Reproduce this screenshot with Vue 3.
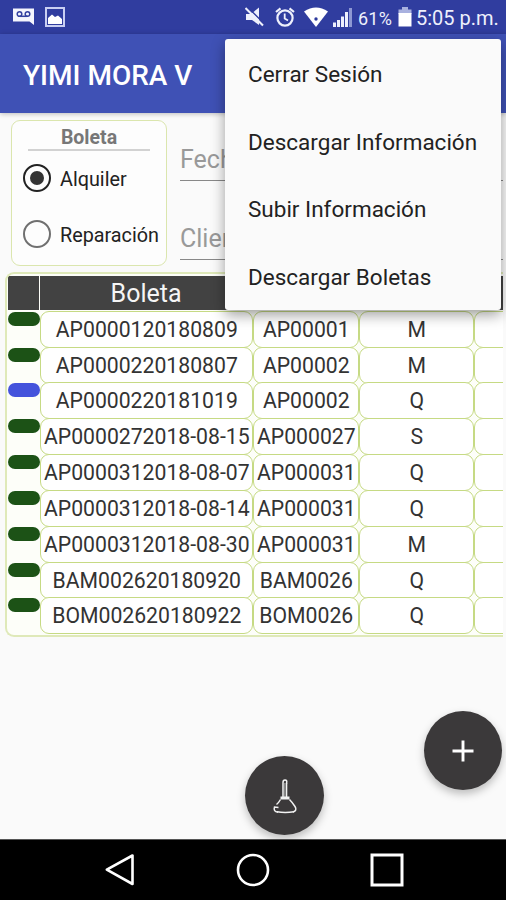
<script setup>
import { ref } from "vue";

const tipo = ref("alquiler"); // tipo de boleta seleccionado
const menuItems = [
    "Cerrar Sesión",
    "Descargar Información",
    "Subir Información",
    "Descargar Boletas",
];
const boletas = [
    { boleta: "AP0000120180809", equipo: "AP00001", modo: "M" },
    { boleta: "AP0000220180807", equipo: "AP00002", modo: "M" },
    { boleta: "AP0000220181019", equipo: "AP00002", modo: "Q", pendiente: true },
    { boleta: "AP0000272018-08-15", equipo: "AP000027", modo: "S" },
    { boleta: "AP0000312018-08-07", equipo: "AP000031", modo: "Q" },
    { boleta: "AP0000312018-08-14", equipo: "AP000031", modo: "Q" },
    { boleta: "AP0000312018-08-30", equipo: "AP000031", modo: "M" },
    { boleta: "BAM002620180920", equipo: "BAM0026", modo: "Q" },
    { boleta: "BOM002620180922", equipo: "BOM0026", modo: "Q" },
];
</script>
<template>
    <div class="screen">
        <!-- barra de estado -->
        <div class="status">
            <svg class="voicemail" width="22" height="18" viewBox="0 0 22 18">
                <path d="M0 0.5H21V17L16.500 13.500H0Z" fill="#f4f5fd" />
                <g fill="none" stroke="#3341a0" stroke-width="1.500">
                    <circle cx="6.500" cy="6" r="2.300" />
                    <circle cx="14.500" cy="6" r="2.300" />
                    <path d="M6.500 8.300H14.500" />
                </g>
            </svg>
            <svg class="picture" width="20" height="20" viewBox="0 0 20 20">
                <rect x="1" y="1" width="18" height="18" fill="none" stroke="#c9cff2" stroke-width="2" />
                <path d="M3 17V11L7 7.500L10 10L13 8.500L17 12V17Z" fill="#fff" />
            </svg>
            <span class="grow"></span>
            <svg class="mute" width="20" height="20" viewBox="0 0 20 20">
                <path d="M1 7H6L14 0.500V18L7 13H1Z" fill="#eef0fc" />
                <path d="M1.500 -1L20 17.500" stroke="#303d9f" stroke-width="1.500" />
                <path d="M0.500 1L18 18.500" stroke="#eef0fc" stroke-width="2" />
            </svg>
            <svg class="alarm" width="20" height="20" viewBox="0 0 20 20">
                <g fill="none" stroke="#eef0fc" stroke-width="2.200">
                    <circle cx="10" cy="11" r="7.600" />
                    <path d="M1 5L5.500 1.300M19 5L14.500 1.300" />
                    <path d="M9.700 6.500V11.500L13 13.500" stroke-width="1.800" />
                </g>
            </svg>
            <svg class="wifi" width="24" height="20" viewBox="0 0 24 20">
                <path d="M0 4.500Q12 -3.500 24 4.500L12 20Z" fill="#fff" />
                <circle cx="12" cy="12" r="1.700" fill="#2d3a9d" />
            </svg>
            <svg class="signal" width="20" height="20" viewBox="0 0 20 20">
                <path d="M0 15.500H3V20H0ZM4 13H7V20H4ZM8 9.500H11V20H8ZM12 5H15V20H12Z" fill="#eef0fc" />
                <path d="M16 1H19V20H16Z" fill="#8e98d3" />
            </svg>
            <span class="percent">61%</span>
            <svg class="battery" width="14" height="20" viewBox="0 0 14 20">
                <path d="M4 0H10V2.500H13.500V7H0.500V2.500H4Z" fill="#a9b1df" />
                <path d="M0.500 6H13.500V19.500H0.500Z" fill="#fff" />
            </svg>
            <span class="clock">5:05 p.m.</span>
        </div>

        <header class="appbar">
            <h1>YIMI MORA V</h1>
        </header>

        <main class="content">
            <section class="filters">
                <div class="tipo">
                    <h2>Boleta</h2>
                    <div class="radio" @click="tipo = 'alquiler'">
                        <i :class="{ on: tipo === 'alquiler' }"></i>
                        <span>Alquiler</span>
                    </div>
                    <div class="radio" @click="tipo = 'reparacion'">
                        <i :class="{ on: tipo === 'reparacion' }"></i>
                        <span>Reparación</span>
                    </div>
                </div>
                <div class="fields">
                    <div class="field">Fecha</div>
                    <div class="field">Cliente</div>
                </div>
            </section>

            <section class="tabla">
                <div class="row head">
                    <div class="th"></div>
                    <div class="th">Boleta</div>
                    <div class="th"></div>
                    <div class="th"></div>
                    <div class="th"></div>
                </div>
                <div v-for="b in boletas" :key="b.boleta" class="row">
                    <div class="estado"><i :class="{ pendiente: b.pendiente }"></i></div>
                    <div class="td">{{ b.boleta }}</div>
                    <div class="td">{{ b.equipo }}</div>
                    <div class="td">{{ b.modo }}</div>
                    <div class="td"></div>
                </div>
            </section>
        </main>

        <!-- barra de navegación -->
        <nav class="navbar">
            <svg width="30" height="34" viewBox="0 0 30 34">
                <path d="M27.500 2.500V31L1.800 16.700Z" fill="none" stroke="#fff" stroke-width="2.600" stroke-linejoin="round" />
            </svg>
            <svg width="34" height="34" viewBox="0 0 34 34">
                <circle cx="17" cy="17" r="15" fill="none" stroke="#fff" stroke-width="2.600" />
            </svg>
            <svg width="34" height="34" viewBox="0 0 34 34">
                <rect x="2" y="2" width="30" height="30" fill="none" stroke="#fff" stroke-width="3" />
            </svg>
        </nav>

        <!-- botones flotantes -->
        <button class="fab clean">
            <svg width="26" height="38" viewBox="0 0 26 38" fill="none" stroke="#f2f2f2">
                <path d="M11 20V5.500Q11 3 13 3Q15.500 3 14.500 6.500" stroke-width="1.500" />
                <path d="M14.500 6V20" stroke-width="1.600" />
                <path d="M12.800 6V20" stroke="#8d8d8d" stroke-width="1.500" />
                <path d="M8.500 21H17.500" stroke-width="3" />
                <path d="M8.500 22.500Q6.500 26 4.500 27.500M17.500 22.500Q20 25 23 29.500Q25.500 33.500 21 35" stroke-width="1.500" />
                <path d="M6.500 30.500L2.500 30Q1 34.500 6 35.200" stroke-width="1.500" />
                <path d="M5 34.800Q13 36.300 22 34.800" stroke-width="1.600" />
            </svg>
        </button>
        <button class="fab add">
            <svg width="22" height="22" viewBox="0 0 22 22">
                <path d="M11 0.500V21.500M0.500 11H21.500" stroke="#fff" stroke-width="2.900" />
            </svg>
        </button>

        <!-- menú desplegable -->
        <div class="menu">
            <div v-for="item in menuItems" :key="item" class="menu-item"><span>{{ item }}</span></div>
        </div>
    </div>
</template>
<style>
body {
    margin: 0;
    overflow: hidden;
}
</style>
<style scoped>
.screen {
    position: relative;
    display: flex;
    flex-direction: column;
    width: 506px;
    height: 900px;
    overflow: hidden;
    background: #fafafa;
    font-family: Roboto, "Liberation Sans", sans-serif;
    color: #222;
}

.screen * {
    box-sizing: border-box;
}

svg {
    display: block;
    flex: none;
}

/* barra de estado */
.status {
    display: flex;
    align-items: center;
    flex: none;
    height: 34px;
    padding: 0 8px 0 13px;
    background: #303d9f;
    color: #eef0fc;
    white-space: nowrap;
}

.picture {
    margin-left: 10px;
}

.grow {
    flex: 1;
}

.alarm {
    margin-left: 10px;
}

.wifi {
    margin-left: 9px;
}

.signal {
    margin-left: 5px;
}

.percent {
    width: 35px;
    margin-left: 5px;
    padding-top: 2px;
    font-size: 18px;
    letter-spacing: 0.2px;
}

.battery {
    margin-left: 5px;
}

.clock {
    width: 82px;
    margin-left: 4px;
    padding-top: 2px;
    font-size: 20px;
}

.appbar {
    display: flex;
    align-items: center;
    flex: none;
    height: 79px;
    padding: 3px 23px 0;
    background: #3f51b5;
    box-shadow: 0 1px 5px rgba(0, 0, 0, 0.25);
    color: #fff;
}

h1 {
    margin: 0;
    font-size: 28px;
    font-weight: 500;
}

.content {
    flex: 1;
    padding: 7px 3px 0 5px;
    overflow: hidden;
}

/* filtros */
.filters {
    display: flex;
    height: 152px;
}

.tipo {
    width: 156px;
    height: 146px;
    margin-left: 6px;
    padding: 5px 10px 0 11px;
    border: 1.5px solid #dbe6ae;
    border-radius: 9px;
    background: #fdfdfd;
}

h2 {
    width: 122px;
    height: 25px;
    margin: 0 0 0 5px;
    border-bottom: 2px solid #d2d2d2;
    font-size: 19.5px;
    font-weight: 700;
    line-height: 23px;
    text-align: center;
    color: #777;
}

.radio {
    display: flex;
    align-items: center;
    height: 56px;
    font-size: 19.8px;
    color: #222;
    white-space: nowrap;
}

.radio i {
    display: flex;
    align-items: center;
    justify-content: center;
    flex: none;
    width: 28px;
    height: 28px;
    margin: -3px 9px 0 0;
    border: 2.5px solid #707070;
    border-radius: 50%;
}

.radio i.on {
    border-color: #222;
}

.radio i.on::after {
    content: "";
    width: 14px;
    height: 14px;
    border-radius: 50%;
    background: #333;
}

.fields {
    flex: 1;
    margin-left: 13px;
}

.field {
    height: 61px;
    padding-top: 23px;
    border-bottom: 1.5px solid #888;
    font-size: 25px;
    line-height: 34px;
    color: #999;
}

.field + .field {
    height: 79px;
    padding-top: 41px;
}

/* tabla de boletas */
.tabla {
    height: 365px;
    padding: 2px 0 0 2px;
    overflow: hidden;
    border: 2px solid #dfe9b9;
    border-right: 0;
    border-radius: 9px 0 0 9px;
    background: #fdfef9;
}

.row {
    display: grid;
    grid-template-columns: 32.3px 213px 106px 115px 60px;
    height: 35.85px;
    margin-left: -1px;
}

.head {
    height: 34px;
    margin-bottom: 0.7px;
}

.th {
    height: 34px;
    margin-right: 1.5px;
    background: #424242;
    color: #f5f5f5;
    font-size: 25px;
    line-height: 36px;
    text-align: center;
}

.estado i {
    display: block;
    width: 32px;
    height: 14px;
    margin-top: 1px;
    border-radius: 7px;
    background: #1c5216;
}

.estado i.pendiente {
    background: #4453dc;
}

.td {
    border: 1px solid #c6da84;
    border-radius: 9px;
    background: #fff;
    font-size: 21.2px;
    line-height: 35px;
    text-align: center;
    white-space: nowrap;
    color: #333;
}

.navbar {
    display: flex;
    align-items: center;
    justify-content: space-between;
    flex: none;
    height: 61px;
    padding: 0 102px 1px 105px;
    border-top: 1px solid #555;
    background: #000;
}

/* botones flotantes */
.fab {
    position: absolute;
    display: flex;
    align-items: center;
    justify-content: center;
    width: 79px;
    height: 79px;
    padding: 0;
    border: 0;
    border-radius: 50%;
    background: #3b393a;
    box-shadow: 0 4px 8px rgba(0, 0, 0, 0.25);
}

.clean {
    left: 245px;
    top: 756px;
}

.add {
    left: 424px;
    top: 711px;
    width: 78px;
}

/* menú */
.menu {
    position: absolute;
    left: 225px;
    top: 39px;
    width: 276px;
    height: 271px;
    border-radius: 3px;
    background: #fafafa;
    box-shadow: 0 5px 14px rgba(0, 0, 0, 0.38);
}

.menu-item {
    display: flex;
    align-items: center;
    height: 67.5px;
    padding: 3px 0 0 23px;
    font-size: 22.5px;
    white-space: nowrap;
    color: #222;
}
</style>
